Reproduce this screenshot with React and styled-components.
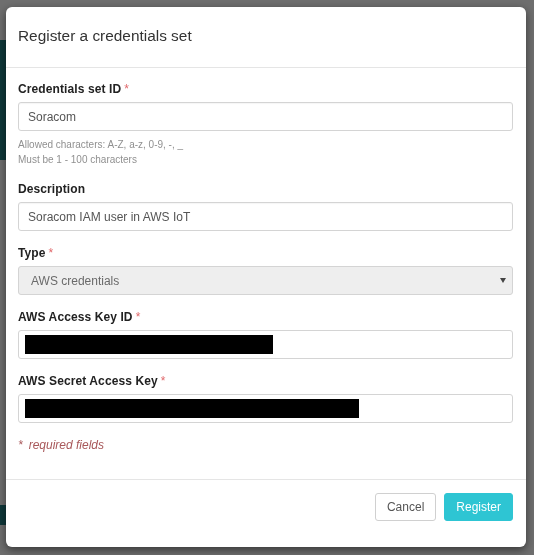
import React from 'react';
import styled, { createGlobalStyle } from 'styled-components';

const GlobalStyle = createGlobalStyle`
  html, body {
    margin: 0;
    padding: 0;
    background: #6f6f6f;
  }
  body {
    font-family: "Liberation Sans", Arial, Helvetica, sans-serif;
    color: #333;
  }
  * {
    box-sizing: border-box;
  }
`;

// page that sits behind the backdrop
const Page = styled.div`
  width: 534px;
  height: 555px;
  background: #dcdcdc;
  display: flex;
  flex-direction: column;
  padding-top: 40px;
`;

const PageStrip = styled.div`
  height: ${(p) => p.h}px;
  margin-top: ${(p) => p.mt || 0}px;
  background: ${(p) => p.bg};
  width: ${(p) => p.w || '100%'};
`;

const Backdrop = styled.div`
  position: fixed;
  inset: 0;
  background: rgba(0, 0, 0, 0.5);
  padding: 7px 0 0 6px;
`;

const Modal = styled.div`
  width: 520px;
  background: #fff;
  border-radius: 6px;
  box-shadow: 0 3px 9px rgba(0, 0, 0, 0.5);
  display: flex;
  flex-direction: column;
`;

const Header = styled.div`
  height: 61px;
  padding: 0 13px 2px 12px;
  display: flex;
  align-items: center;
  border-bottom: 1px solid #e5e5e5;
`;

const Title = styled.h4`
  margin: 0;
  font-size: 15.4px;
  font-weight: normal;
  color: #333;
`;

const Body = styled.div`
  padding: 13px 13px 26px 12px;
  display: flex;
  flex-direction: column;
`;

const Group = styled.div`
  display: flex;
  flex-direction: column;
  margin-bottom: ${(p) => (p.last ? 0 : 14)}px;
`;

const Label = styled.label`
  font-size: 12px;
  line-height: 16px;
  font-weight: bold;
  color: #222;
  letter-spacing: 0.1px;
  margin-bottom: 5px;
`;

const Star = styled.span`
  color: #e0686b;
  font-weight: normal;
  margin-left: 3px;
`;

const Input = styled.input`
  height: 29px;
  width: 100%;
  border: 1px solid #d4d4d4;
  border-radius: 3px;
  padding: 0 9px;
  font-family: inherit;
  font-size: 12px;
  color: #555;
  background: #fff;
  box-shadow: inset 0 1px 1px rgba(0, 0, 0, 0.04);
  outline: none;
`;

const MaskedBox = styled.div`
  height: 29px;
  border: 1px solid #d4d4d4;
  border-radius: 3px;
  padding: 0 6px;
  display: flex;
  align-items: center;
  background: #fff;
`;

const Redaction = styled.span`
  display: block;
  height: 19px;
  width: ${(p) => p.w}px;
  background: #000;
`;

const Help = styled.div`
  margin-top: 6px;
  font-size: 10px;
  line-height: 15px;
  color: #909090;
`;

const SelectWrap = styled.div`
  position: relative;
`;

const Select = styled.select`
  appearance: none;
  -webkit-appearance: none;
  height: 29px;
  width: 100%;
  border: 1px solid #d4d4d4;
  border-radius: 3px;
  padding: 0 12px;
  font-family: inherit;
  font-size: 12px;
  color: #6a6a6a;
  background: #eeeeee;
  opacity: 1;
`;

const Caret = styled.span`
  position: absolute;
  right: 7px;
  top: 12px;
  width: 0;
  height: 0;
  border-left: 3px solid transparent;
  border-right: 3px solid transparent;
  border-top: 5px solid #444;
  pointer-events: none;
`;

const Required = styled.div`
  font-size: 12px;
  line-height: 16px;
  font-style: italic;
  color: #a8585a;
`;

const ReqMark = styled.span`
  margin-right: 6px;
`;

const Footer = styled.div`
  border-top: 1px solid #e5e5e5;
  padding: 13px 13px 26px 12px;
  display: flex;
  justify-content: flex-end;
  gap: 8px;
`;

const Button = styled.button`
  height: 28px;
  padding: 0 11px;
  border-radius: 3px;
  font-family: inherit;
  font-size: 12px;
  border: 1px solid ${(p) => (p.primary ? '#2ec5d3' : '#d0d0d0')};
  background: ${(p) => (p.primary ? '#2ec5d3' : '#fff')};
  color: ${(p) => (p.primary ? '#fff' : '#555')};
  cursor: pointer;
`;

export default function App() {
  return (
    <>
      <GlobalStyle />
      <Page>
        <PageStrip h={120} bg="#1f6f73" w="6px" />
        <PageStrip h={20} mt={345} bg="#1f6f73" w="6px" />
      </Page>
      <Backdrop>
        <Modal>
          <Header>
            <Title>Register a credentials set</Title>
          </Header>
          <Body>
            <Group>
              <Label>
                Credentials set ID<Star>*</Star>
              </Label>
              <Input readOnly defaultValue="Soracom" />
              <Help>
                Allowed characters: A-Z, a-z, 0-9, -, _
                <br />
                Must be 1 - 100 characters
              </Help>
            </Group>
            <Group>
              <Label>Description</Label>
              <Input readOnly defaultValue="Soracom IAM user in AWS IoT" />
            </Group>
            <Group>
              <Label>
                Type<Star>*</Star>
              </Label>
              <SelectWrap>
                <Select disabled defaultValue="aws">
                  <option value="aws">AWS credentials</option>
                </Select>
                <Caret />
              </SelectWrap>
            </Group>
            <Group>
              <Label>
                AWS Access Key ID<Star>*</Star>
              </Label>
              <MaskedBox>
                <Redaction w={248} />
              </MaskedBox>
            </Group>
            <Group>
              <Label>
                AWS Secret Access Key<Star>*</Star>
              </Label>
              <MaskedBox>
                <Redaction w={334} />
              </MaskedBox>
            </Group>
            <Group last>
              <Required>
                <ReqMark>*</ReqMark>required fields
              </Required>
            </Group>
          </Body>
          <Footer>
            <Button>Cancel</Button>
            <Button primary>Register</Button>
          </Footer>
        </Modal>
      </Backdrop>
    </>
  );
}
